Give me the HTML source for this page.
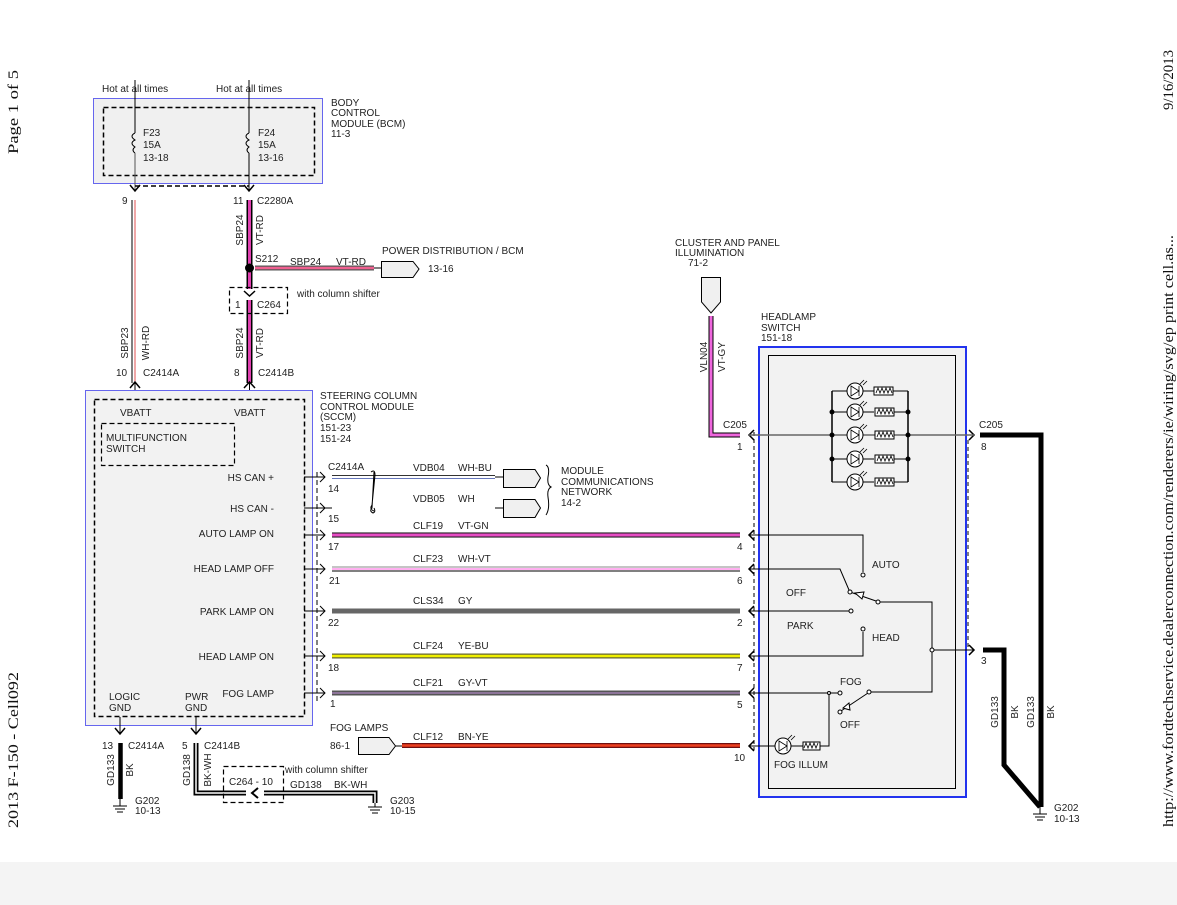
<!DOCTYPE html>
<html><head><meta charset="utf-8"><style>
html,body{margin:0;padding:0;background:#fff;}
svg{display:block}
text{font-family:"Liberation Sans",sans-serif;font-size:10px;fill:#222;}
.s{font-family:"Liberation Serif",serif;font-size:15px;fill:#111;}
</style></head><body>
<svg width="1177" height="905" viewBox="0 0 1177 905" xmlns="http://www.w3.org/2000/svg">
<rect x="0" y="862" width="1177" height="43" fill="#f4f4f4"/>
<!-- margin texts -->
<text class="s" transform="translate(18,112) rotate(-90)" text-anchor="middle" textLength="84" lengthAdjust="spacingAndGlyphs">Page 1 of 5</text>
<text class="s" transform="translate(18,750) rotate(-90)" text-anchor="middle" textLength="156" lengthAdjust="spacingAndGlyphs">2013 F-150 - Cell092</text>
<text class="s" transform="translate(1173,531) rotate(-90)" text-anchor="middle" textLength="592" lengthAdjust="spacingAndGlyphs">http://www.fordtechservice.dealerconnection.com/renderers/ie/wiring/svg/ep  print  cell.as...</text>
<text class="s" transform="translate(1173,80) rotate(-90)" text-anchor="middle" textLength="60" lengthAdjust="spacingAndGlyphs">9/16/2013</text>

<g fill="none" stroke="#000" stroke-width="1">
<!-- BCM -->
<rect x="93.5" y="98.5" width="229" height="85" fill="#f0f0f0" stroke="#6666ee"/>
<rect x="103.5" y="107.5" width="211" height="68" stroke-dasharray="5,3" stroke-width="1.5"/>
<line x1="135" y1="80" x2="135" y2="133"/><line x1="135" y1="153" x2="135" y2="190" stroke="#555"/>
<line x1="249" y1="80" x2="249" y2="133"/><line x1="249" y1="153" x2="249" y2="190"/>
<path d="M135 133 q-6 3 0 7 q-6 3 0 7 q-4 3 0 6"/>
<path d="M249 133 q-6 3 0 7 q-6 3 0 7 q-4 3 0 6"/>
<line x1="135" y1="186" x2="249" y2="186" stroke-dasharray="5,3" stroke-width="1.5"/>
<path d="M130 185 L135 191 L140 185 M244 185 L249 191 L254 185" stroke-width="1.5"/>
<!-- left wire WH-RD -->
<line x1="132" y1="200" x2="132" y2="383"/>
<line x1="135" y1="200" x2="135" y2="383" stroke="#e05050"/>
<!-- right wire VT-RD -->
<line x1="249.5" y1="200" x2="249.5" y2="289" stroke-width="6"/>
<line x1="249.5" y1="200" x2="249.5" y2="289" stroke="#e040b0" stroke-width="3"/>
<line x1="249.5" y1="300" x2="249.5" y2="383" stroke-width="6"/>
<line x1="249.5" y1="300" x2="249.5" y2="383" stroke="#e040b0" stroke-width="3"/>
<line x1="255" y1="268" x2="374" y2="268" stroke="#555" stroke-width="5"/>
<line x1="255" y1="268" x2="374" y2="268" stroke="#f06090" stroke-width="2.5"/>
<circle cx="249.5" cy="268" r="4" fill="#000"/>
<path d="M374 268 H381 M381.5 261.5 H413 L419 269 L413 277.5 H381.5 Z" fill="#f0f0f0"/>
<rect x="229.5" y="287.5" width="58" height="26" stroke-dasharray="5,3" stroke-width="1.2"/>
<path d="M244 291 L249.5 296 L255 291" stroke-width="1.5"/>
<path d="M130 388 L135 382 L140 388 M244 388 L249.5 382 L255 388" stroke-width="1.5"/>
<line x1="135" y1="382" x2="135" y2="400"/><line x1="249.5" y1="382" x2="249.5" y2="400"/>

<!-- SCCM -->
<rect x="85.5" y="390.5" width="227" height="335" fill="#f2f2f2" stroke="#6666ee"/>
<rect x="94.5" y="399.5" width="210" height="317" stroke-dasharray="5,3" stroke-width="1.5"/>
<rect x="101.5" y="423.5" width="133" height="42" stroke-dasharray="5,3" stroke-width="1.2"/>
<line x1="317" y1="472" x2="317" y2="704" stroke-dasharray="5,3"/>
<g stroke-width="1">
<path d="M304 477 H325 M320 472 L325 477 L320 482"/>
<path d="M304 508 H332 M320 503 L325 508 L320 513"/>
<path d="M304 535 H325 M320 530 L325 535 L320 540"/>
<path d="M304 569 H325 M320 564 L325 569 L320 574"/>
<path d="M304 611 H325 M320 606 L325 611 L320 616"/>
<path d="M304 656 H325 M320 651 L325 656 L320 661"/>
<path d="M304 693 H325 M320 688 L325 693 L320 698"/>
</g>
<!-- CAN wires -->
<line x1="332" y1="475.5" x2="495" y2="475.5" stroke="#333"/>
<line x1="332" y1="478.5" x2="495" y2="478.5" stroke="#6677bb"/>
<line x1="495" y1="477" x2="503" y2="477"/>
<line x1="495" y1="508" x2="503" y2="508"/>
<path d="M503.5 469.5 H535 L540.5 478 L535 487.5 H503.5 Z" fill="#f0f0f0"/>
<path d="M503.5 499.5 H535 L540.5 508 L535 517.5 H503.5 Z" fill="#f0f0f0"/>
<path d="M371 472 q4 -3 4 3 l-3 30 q-3 4 2 6 M374 472 l-2 36 q-3 3 1 5 q3 -1 1 -5"/>
<path d="M546 465 q4 2 2 12 q-1 8 3 10 q-4 2 -3 10 q2 12 -2 18" />
<!-- signal wires -->
<line x1="332" y1="535" x2="740" y2="535" stroke-width="5"/>
<line x1="332" y1="535" x2="740" y2="535" stroke="#ff66dd" stroke-width="3"/>
<line x1="332" y1="535" x2="740" y2="535" stroke="#cc33aa" stroke-width="1"/>
<line x1="332" y1="567" x2="740" y2="567" stroke="#888"/>
<line x1="332" y1="569" x2="740" y2="569" stroke="#ffb0f0" stroke-width="2"/>
<line x1="332" y1="571" x2="740" y2="571"/>
<line x1="332" y1="611" x2="740" y2="611" stroke="#666" stroke-width="5"/>
<line x1="332" y1="656" x2="740" y2="656" stroke="#666633" stroke-width="5"/>
<line x1="332" y1="656" x2="740" y2="656" stroke="#f0f000" stroke-width="2.5"/>
<line x1="332" y1="693" x2="740" y2="693" stroke="#555" stroke-width="5"/>
<line x1="332" y1="693" x2="740" y2="693" stroke="#a080b0" stroke-width="1.5"/>
<line x1="402" y1="745.5" x2="740" y2="745.5" stroke="#701010" stroke-width="5"/>
<line x1="402" y1="745.5" x2="740" y2="745.5" stroke="#ee4020" stroke-width="2.5"/>
<path d="M358.5 737.5 H389 L395.5 746 L389 754.5 H358.5 Z" fill="#f0f0f0"/>
<line x1="395" y1="746" x2="402" y2="746"/>
<!-- ground wires left -->
<line x1="120" y1="717" x2="120" y2="733"/>
<path d="M115 728 L120 734 L125 728" stroke-width="1.5"/>
<line x1="120.5" y1="743" x2="120.5" y2="799" stroke-width="4.5"/>
<path d="M120 799 V806 M113 806 H127 M115 809 H125 M117 812 H123"/>
<line x1="196" y1="717" x2="196" y2="733"/>
<path d="M191 728 L196 734 L201 728" stroke-width="1.5"/>
<path d="M196 743 V793 H246 M264 793 H375 V803" stroke-width="5"/>
<path d="M196 743 V793 H246 M264 793 H375 V803" stroke="#fff" stroke-width="1.5"/>
<path d="M258 788 L252 793 L258 798" stroke-width="2"/>
<rect x="223.5" y="766.5" width="60" height="36" stroke-dasharray="5,3" stroke-width="1.2"/>
<path d="M375 803 V807 M368 807 H382 M370 810 H380 M372 813 H378"/>

<!-- cluster -->
<path d="M701.5 277.5 H720.5 V302 L711 313 L701.5 302 Z" fill="#f0f0f0"/>
<path d="M711 316 V435 H740" stroke-width="5"/>
<path d="M711 316 V435 H740" stroke="#ee66dd" stroke-width="3"/>

<!-- headlamp switch -->
<rect x="759" y="347" width="207" height="450" fill="#f2f2f2" stroke="#2233ee" stroke-width="2"/>
<rect x="768.5" y="355.5" width="187" height="433"/>
<line x1="754" y1="432" x2="754" y2="750" stroke-dasharray="4,3"/>
<line x1="968" y1="440" x2="968" y2="648" stroke-dasharray="4,3"/>
<g stroke-width="1.5">
<path d="M754 430 L749 435 L754 440"/><path d="M754 530 L749 535 L754 540"/><path d="M754 564 L749 569 L754 574"/>
<path d="M754 606 L749 611 L754 616"/><path d="M754 651 L749 656 L754 661"/><path d="M754 688 L749 693 L754 698"/>
<path d="M754 741 L749 746 L754 751"/>
<path d="M969 430 L974 435 L969 440"/><path d="M969 645 L974 650 L969 655"/>
</g>
<line x1="749" y1="435" x2="974" y2="435" stroke="#666" stroke-width="1.5"/>
<!-- lamps -->
<path d="M832 391 V482 M908 391 V482" stroke-width="1.5"/>
<g stroke-width="1">
<path d="M832 391 H847 M863 391 H874 M893 391 H908"/>
<path d="M832 412 H847 M863 412 H874 M893 412 H908"/>
<path d="M832 459 H847 M863 459 H874 M893 459 H908"/>
<path d="M832 482 H847 M863 482 H874 M893 482 H908"/>
</g>
<g fill="#fff" stroke-width="1">
<circle cx="855" cy="391" r="8"/><circle cx="855" cy="412" r="8"/><circle cx="855" cy="435" r="8"/><circle cx="855" cy="459" r="8"/><circle cx="855" cy="482" r="8"/>
<rect x="874" y="387" width="19" height="8"/><rect x="875" y="408" width="19" height="8"/><rect x="875" y="431" width="19" height="8"/><rect x="875" y="455" width="19" height="8"/><rect x="875" y="478" width="19" height="8"/>
</g>
<g stroke-width="0.8">
<path d="M851 386 V396 L859 391 Z M859 386 V396 M860 384 l4 -4 M863 385 l4 -4"/>
<path d="M851 407 V417 L859 412 Z M859 407 V417 M860 405 l4 -4 M863 406 l4 -4"/>
<path d="M851 430 V440 L859 435 Z M859 430 V440 M860 428 l4 -4 M863 429 l4 -4"/>
<path d="M851 454 V464 L859 459 Z M859 454 V464 M860 452 l4 -4 M863 453 l4 -4"/>
<path d="M851 477 V487 L859 482 Z M859 477 V487 M860 475 l4 -4 M863 476 l4 -4"/>
<path d="M876 393 l2 -5 l2 5 l2 -5 l2 5 l2 -5 l2 5 l2 -5 l2 5"/>
<path d="M877 414 l2 -5 l2 5 l2 -5 l2 5 l2 -5 l2 5 l2 -5 l2 5"/>
<path d="M877 437 l2 -5 l2 5 l2 -5 l2 5 l2 -5 l2 5 l2 -5 l2 5"/>
<path d="M877 461 l2 -5 l2 5 l2 -5 l2 5 l2 -5 l2 5 l2 -5 l2 5"/>
<path d="M877 484 l2 -5 l2 5 l2 -5 l2 5 l2 -5 l2 5 l2 -5 l2 5"/>
</g>
<g fill="#000"><circle cx="832" cy="412" r="2"/><circle cx="832" cy="435" r="2"/><circle cx="832" cy="459" r="2"/><circle cx="908" cy="412" r="2"/><circle cx="908" cy="435" r="2"/><circle cx="908" cy="459" r="2"/></g>
<!-- switch -->
<g stroke-width="1">
<path d="M749 535 H863 V572"/>
<path d="M749 569 H840 L849 590"/>
<path d="M850 592 L876 601 M878 602 H932 V692 H870"/>
<path d="M749 611 H849"/>
<path d="M863 632 V656 H749"/>
<path d="M932 650 H974"/>
<path d="M749 693 H838"/>
<path d="M841 711 L868 693"/>
<path d="M749 746 H775 M791 746 H803 M820 746 H829 V693"/>
</g>
<g fill="#fff" stroke-width="1">
<circle cx="863" cy="575" r="2"/><circle cx="850" cy="592" r="2"/><circle cx="878" cy="602" r="2"/><circle cx="851" cy="611" r="2"/><circle cx="863" cy="629" r="2"/><circle cx="932" cy="650" r="2"/><circle cx="840" cy="693" r="2"/><circle cx="869" cy="692" r="2"/><circle cx="840" cy="712" r="2"/><circle cx="829" cy="693" r="1.5"/>
<path d="M855 593 L862 599 L864 592 Z"/>
<path d="M843 708 L849 703 L850 710 Z"/>
<circle cx="783" cy="746" r="8"/><rect x="803" y="742" width="17" height="8"/>
</g>
<path d="M779 741 V751 L787 746 Z M787 741 V751 M788 739 l4 -4 M791 740 l4 -4 M804 748 l2 -5 l2 5 l2 -5 l2 5 l2 -5 l2 5 l2 -5" stroke-width="0.8"/>
<!-- ground right -->
<path d="M980 435 H1041 V807" stroke-width="5"/>
<path d="M983 650 H1004 V765 L1040 807" stroke-width="5"/>
<path d="M1040 807 V814 M1033 814 H1047 M1035 817 H1045 M1037 820 H1043"/>
</g>

<!-- TEXT -->
<text x="102" y="92">Hot at all times</text>
<text x="216" y="92">Hot at all times</text>
<text x="331" y="106">BODY</text><text x="331" y="116">CONTROL</text><text x="331" y="127">MODULE (BCM)</text><text x="331" y="137">11-3</text>
<text x="143" y="136">F23</text><text x="143" y="148">15A</text><text x="143" y="161">13-18</text>
<text x="258" y="136">F24</text><text x="258" y="148">15A</text><text x="258" y="161">13-16</text>
<text x="122" y="204">9</text><text x="233" y="204">11</text><text x="257" y="204">C2280A</text>
<text transform="translate(243,230) rotate(-90)" text-anchor="middle">SBP24</text>
<text transform="translate(263,230) rotate(-90)" text-anchor="middle">VT-RD</text>
<text x="255" y="262">S212</text><text x="290" y="265">SBP24</text><text x="336" y="265">VT-RD</text>
<text x="382" y="254">POWER DISTRIBUTION / BCM</text><text x="428" y="272">13-16</text>
<text x="235" y="308">1</text><text x="257" y="308">C264</text><text x="297" y="297">with column shifter</text>
<text transform="translate(128,343) rotate(-90)" text-anchor="middle">SBP23</text>
<text transform="translate(149,343) rotate(-90)" text-anchor="middle">WH-RD</text>
<text transform="translate(243,343) rotate(-90)" text-anchor="middle">SBP24</text>
<text transform="translate(263,343) rotate(-90)" text-anchor="middle">VT-RD</text>
<text x="116" y="376">10</text><text x="143" y="376">C2414A</text><text x="234" y="376">8</text><text x="258" y="376">C2414B</text>
<text x="320" y="399">STEERING COLUMN</text><text x="320" y="410">CONTROL MODULE</text><text x="320" y="420">(SCCM)</text><text x="320" y="431">151-23</text><text x="320" y="442">151-24</text>
<text x="120" y="416">VBATT</text><text x="234" y="416">VBATT</text>
<text x="106" y="441">MULTIFUNCTION</text><text x="106" y="452">SWITCH</text>
<g text-anchor="end">
<text x="274" y="481">HS CAN +</text><text x="274" y="512">HS CAN -</text><text x="274" y="537">AUTO LAMP ON</text>
<text x="274" y="572">HEAD LAMP OFF</text><text x="274" y="615">PARK LAMP ON</text><text x="274" y="660">HEAD LAMP ON</text>
<text x="274" y="697">FOG LAMP</text>
</g>
<text x="109" y="700">LOGIC</text><text x="109" y="711">GND</text><text x="185" y="700">PWR</text><text x="185" y="711">GND</text>
<text x="328" y="470">C2414A</text><text x="328" y="492">14</text><text x="328" y="522">15</text><text x="328" y="550">17</text><text x="329" y="584">21</text><text x="328" y="626">22</text><text x="328" y="671">18</text><text x="330" y="707">1</text>
<text x="413" y="471">VDB04</text><text x="458" y="471">WH-BU</text>
<text x="413" y="502">VDB05</text><text x="458" y="502">WH</text>
<text x="413" y="529">CLF19</text><text x="458" y="529">VT-GN</text>
<text x="413" y="562">CLF23</text><text x="458" y="562">WH-VT</text>
<text x="413" y="604">CLS34</text><text x="458" y="604">GY</text>
<text x="413" y="649">CLF24</text><text x="458" y="649">YE-BU</text>
<text x="413" y="686">CLF21</text><text x="458" y="686">GY-VT</text>
<text x="413" y="740">CLF12</text><text x="458" y="740">BN-YE</text>
<text x="330" y="731">FOG LAMPS</text><text x="330" y="749">86-1</text>
<text x="561" y="474">MODULE</text><text x="561" y="485">COMMUNICATIONS</text><text x="561" y="495">NETWORK</text><text x="561" y="506">14-2</text>
<text x="102" y="749">13</text><text x="128" y="749">C2414A</text><text x="182" y="749">5</text><text x="204" y="749">C2414B</text>
<text transform="translate(114,770) rotate(-90)" text-anchor="middle">GD133</text>
<text transform="translate(133,770) rotate(-90)" text-anchor="middle">BK</text>
<text transform="translate(190,770) rotate(-90)" text-anchor="middle">GD138</text>
<text transform="translate(211,770) rotate(-90)" text-anchor="middle">BK-WH</text>
<text x="229" y="785">C264  - 10</text><text x="285" y="773">with column shifter</text>
<text x="290" y="788">GD138</text><text x="334" y="788">BK-WH</text>
<text x="135" y="804">G202</text><text x="135" y="814">10-13</text>
<text x="390" y="804">G203</text><text x="390" y="814">10-15</text>
<text x="675" y="246">CLUSTER AND PANEL</text><text x="675" y="256">ILLUMINATION</text><text x="688" y="266">71-2</text>
<text transform="translate(707,357) rotate(-90)" text-anchor="middle">VLN04</text>
<text transform="translate(725,357) rotate(-90)" text-anchor="middle">VT-GY</text>
<text x="761" y="320">HEADLAMP</text><text x="761" y="331">SWITCH</text><text x="761" y="341">151-18</text>
<text x="723" y="428">C205</text><text x="737" y="450">1</text>
<text x="737" y="550">4</text><text x="737" y="584">6</text><text x="737" y="626">2</text><text x="737" y="671">7</text><text x="737" y="708">5</text><text x="734" y="761">10</text>
<text x="979" y="428">C205</text><text x="981" y="450">8</text><text x="981" y="664">3</text>
<text x="872" y="568">AUTO</text><text x="786" y="596">OFF</text><text x="787" y="629">PARK</text><text x="872" y="641">HEAD</text>
<text x="840" y="685">FOG</text><text x="840" y="728">OFF</text><text x="774" y="768">FOG ILLUM</text>
<text transform="translate(998,712) rotate(-90)" text-anchor="middle">GD133</text>
<text transform="translate(1018,712) rotate(-90)" text-anchor="middle">BK</text>
<text transform="translate(1034,712) rotate(-90)" text-anchor="middle">GD133</text>
<text transform="translate(1054,712) rotate(-90)" text-anchor="middle">BK</text>
<text x="1054" y="811">G202</text><text x="1054" y="822">10-13</text>
</svg>
</body></html>
